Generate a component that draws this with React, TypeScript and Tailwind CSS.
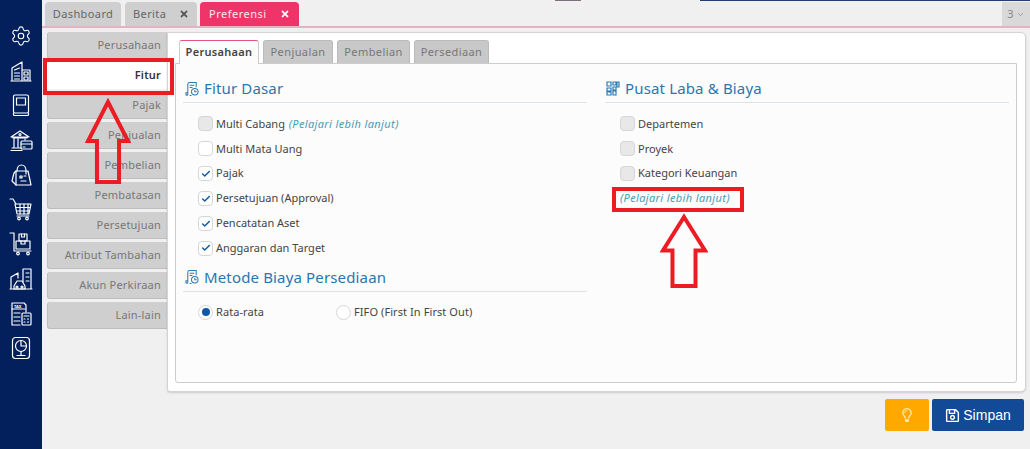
import React from "react";
import { Settings, ChevronDown, Check } from "lucide-react";
import { FaTimes, FaRegSave, FaRegLightbulb } from "react-icons/fa";

const font = "font-['Noto_Sans','Open_Sans',sans-serif]";

function Side({ d }: { d: React.ReactNode }) {
  return (
    <svg width="24" height="24" viewBox="0 0 24 24" fill="none" stroke="white" strokeWidth="1.2" strokeLinejoin="round" strokeLinecap="round">
      {d}
    </svg>
  );
}

const sideIcons: React.ReactNode[] = [
  <Settings key="s" size={22} color="white" strokeWidth={1.2} />,
  <Side key="b" d={<><path d="M3 22V9l10-6v19M13 11h8v11M2 22h20" /><path d="M5.5 11l5-2M5.5 14h5M5.5 17h5M5.5 20h5M15 13h4v3h-4zM15 18h4v3h-4z" /></>} />,
  <Side key="k" d={<><rect x="4.5" y="2" width="15" height="18" rx="1.5" /><path d="M4.5 20v1.5a1 1 0 0 0 1 1h13a1 1 0 0 0 1-1V20M7.5 5h9v7h-9z" /></>} />,
  <Side key="bk" d={<><path d="M2 9l9-6 9 6zM4 9v1h14V9M5 11v8M9 11v8M3 20h9M2 22.5h11" /><circle cx="11" cy="6.5" r="1" /><rect x="12" y="13" width="11" height="8" rx="1" /><path d="M12 16h11M14 19h2" /><path d="M16 11v1" /></>} />,
  <Side key="bag" d={<><path d="M8 8c0-8 9-8 9 0v3" /><path d="M7 8h12l3 14H7L3 18l2-8z" /><path d="M7 8v14" /><path d="M11 13h2v2h-2zM15 13h2M12 18h5" /></>} />,
  <Side key="c1" d={<><path d="M1 2h3l3 5h15l-2 10H8L6 7" /><path d="M11 7v10M15 7v10M19 7v10M7 10.5h14M8 14h12M8 19h12" /><circle cx="10" cy="21.5" r="1.3" /><circle cx="18" cy="21.5" r="1.3" /></>} />,
  <Side key="c2" d={<><path d="M1 1h4v18h17" /><rect x="10" y="2" width="8" height="7" /><rect x="7" y="9" width="14" height="8" /><path d="M12.5 2v3h3V2M12 9v3h4V9" /><circle cx="9" cy="21.5" r="1.3" /><circle cx="19" cy="21.5" r="1.3" /></>} />,
  <Side key="f" d={<><path d="M2 22V10l7-4v5M14 15V2h8v20M1 22h22" /><path d="M17 6h3M17 10h3M17 14h3" /><path d="M5 22v-3l3-5h5l3 5v3z" /><circle cx="8" cy="20" r="1" /><circle cx="13" cy="20" r="1" /></>} />,
  <Side key="tax" d={<><path d="M11 23H3V1h12l2 2v7" /><path d="M3 7h13" /><text x="5" y="5.5" fontSize="4" fill="white" stroke="none" fontWeight="700">TAX</text><path d="M5 11h6M5 15h6M5 19h6" /><rect x="13" y="11" width="9" height="12" rx="1" /><path d="M15 14h5M15 17h1M18.5 17h1M15 20h1M18.5 20h1" /></>} />,
  <Side key="pie" d={<><rect x="3.5" y="1.5" width="17" height="21" rx="3" /><circle cx="12" cy="10" r="5.5" /><path d="M12 4.5v5.5h5.5" /><path d="M8 19.5h8M12 15.5v4" /></>} />,
];

const sideTabs = ["Perusahaan", "Fitur", "Pajak", "Penjualan", "Pembelian", "Pembatasan", "Persetujuan", "Atribut Tambahan", "Akun Perkiraan", "Lain-lain"];

function Doc() {
  return (
    <svg width="14" height="16" viewBox="0 0 15 16" fill="none" stroke="#2a7ab5" strokeWidth="1.1" className="shrink-0 ml-[1px]">
      <path d="M3 14V3c0-1 1-2 2-2h7v5M3 14c0 1-2 1-2 0v-2h2M5 15h2M5 4h5M5 6.5h3" />
      <circle cx="10.5" cy="11" r="3.5" />
      <path d="M10.5 9v2h2" />
    </svg>
  );
}

function Grid() {
  return (
    <svg width="14" height="15" viewBox="0 0 14 15" fill="none" stroke="#2a7ab5" strokeWidth="1.2" className="shrink-0">
      <path d="M1 1h4v4H1zM7 1h3v3H7zM11 1h2v5h-2zM1 7h4v3H1zM1 11h4v3H1zM7 6h3v3H7zM7 10h3v4H7z" />
    </svg>
  );
}

function Heading({ icon, children }: { icon: React.ReactNode; children: React.ReactNode }) {
  return (
    <div className="flex items-center gap-[5px] h-[28px] border-b border-[#dde2e6] text-[#2a76ad] text-[15px] tracking-[0.15px] leading-none pl-[1px]">
      {icon}
      <span>{children}</span>
    </div>
  );
}

function Cb({ state, children }: { state: "off" | "gray" | "on"; children: React.ReactNode }) {
  return (
    <div className="flex items-center h-[24.9px] gap-[3px]">
      <span className={`w-[15px] h-[15px] rounded-[4px] border border-[#d6d6d6] flex items-center justify-center shrink-0 ${state === "gray" ? "bg-[#e8e8e8]" : "bg-white"}`}>
        {state === "on" && <Check size={10} color="#0f5aa6" strokeWidth={3.5} />}
      </span>
      <span className="text-[11px] text-[#444] tracking-[0px]">{children}</span>
    </div>
  );
}

function Learn({ className }: { className?: string }) {
  return <i className={`text-[11px] text-[#4a9bb5] tracking-[0.36px] ${className ?? ""}`}>(Pelajari lebih lanjut)</i>;
}

function Radio({ on, children, className }: { on?: boolean; children: React.ReactNode; className?: string }) {
  return (
    <div className={`flex items-center gap-[3px] ${className ?? ""}`}>
      <span className="w-[15px] h-[15px] rounded-full border border-[#d6d6d6] bg-white flex items-center justify-center shrink-0">
        {on && <span className="w-[8px] h-[8px] rounded-full bg-[#0f5aa6]" />}
      </span>
      <span className="text-[11px] text-[#444] tracking-[0.08px]">{children}</span>
    </div>
  );
}

function Arrow({ className, w, h }: { className: string; w: number; h: number }) {
  return (
    <svg className={`absolute ${className}`} width={w} height={h} viewBox={`0 0 ${w} ${h}`} fill="none" stroke="#ec1c24" strokeWidth="4" strokeLinejoin="miter">
      <path d={`M${w / 2} 4 L${w - 3} ${h * 0.5} H${w * 0.74} V${h - 2} H${w * 0.26} V${h * 0.5} H3 Z`} />
    </svg>
  );
}

export default function App() {
  return (
    <div className={`relative flex w-[1030px] h-[449px] overflow-hidden bg-[#f0f0f0] ${font}`}>
      <aside className="w-[42px] shrink-0 bg-[#03205c] flex flex-col items-center pt-[24px] gap-[10.7px]">
        {sideIcons.map((ic, i) => (
          <div key={i} className="h-[24px] w-[24px] flex items-center justify-center">{ic}</div>
        ))}
      </aside>
      <main className="flex-1 min-w-0 flex flex-col">
        <div className="h-[1px] shrink-0 flex pl-[513px]">
          <div className="w-[26px] h-[1px] bg-[#7d6f7d]" />
          <div className="ml-[119px] w-[330px] h-[1px] bg-[#23406f]" />
        </div>
        <div className="h-[24px] mt-[1px] shrink-0 flex items-end pl-[3px] gap-[3px] border-b-2 border-[#e3b3c2] box-content">
          <div className="w-[76px] h-[24px] rounded-t-[4px] bg-[#cfcfcf] flex items-center justify-center text-[11px] text-[#666] tracking-[0.4px]">Dashboard</div>
          <div className="ml-[1px] w-[72px] h-[24px] rounded-t-[4px] bg-[#cfcfcf] flex items-center justify-between pl-[8px] pr-[8px] text-[11px] text-[#666] tracking-[0.4px]">
            Berita <FaTimes size={10} color="#555" />
          </div>
          <div className="w-[99px] h-[24px] rounded-t-[4px] bg-[#ee3468] flex items-center justify-between pl-[9px] pr-[9px] text-[11px] text-[#fde7ee] tracking-[0.5px]">
            Preferensi <FaTimes size={10} color="white" />
          </div>
          <div className="ml-auto w-[28px] h-[24px] bg-[#d9d9d9] flex items-center justify-center gap-[2px] text-[11px] text-[#888]">
            3 <ChevronDown size={9} color="#888" />
          </div>
        </div>
        <div className="flex-1 flex flex-col">
          <div className="flex h-[360px] mt-[4px] pl-[5px] pr-[4px]">
            <div className="w-[120px] shrink-0 flex flex-col gap-[3px]">
              {sideTabs.map((t) => (
                <div key={t} className={`h-[27px] shrink-0 flex items-center justify-end pr-[6px] rounded-l-[3px] text-[11px] tracking-[0.2px] ${t === "Fitur" ? "bg-white text-[#333] font-semibold" : "bg-[#cfcfcf] text-[#777] border-l border-b border-[#bdbdbd]"}`}>
                  {t}
                </div>
              ))}
            </div>
            <div className="flex-1 bg-white rounded-r-[5px] rounded-bl-[3px] border border-[#d4d4d4] shadow-[0_1px_2px_rgba(0,0,0,0.15)] pt-[7px] pl-[7px] pr-[8px] pb-[8px] flex flex-col">
              <div className="flex items-end h-[23px] gap-[4px] pl-[4px] shrink-0 relative z-10">
                <div className="w-[80px] h-[24px] -mb-[1px] bg-[#fcfcfc] rounded-t-[3px] border border-b-0 border-[#ccc] border-t-[#e3557f] flex items-center justify-center text-[11px] font-semibold text-[#444] tracking-[0.3px]">Perusahaan</div>
                <div className="w-[70px] h-[23px] bg-[#c8c8c8] rounded-t-[3px] border border-[#bbb] border-b-0 flex items-center justify-center text-[11px] text-[#777] tracking-[0.4px]">Penjualan</div>
                <div className="w-[73px] h-[23px] bg-[#c8c8c8] rounded-t-[3px] border border-[#bbb] border-b-0 flex items-center justify-center text-[11px] text-[#777] tracking-[0.4px]">Pembelian</div>
                <div className="w-[75px] h-[23px] bg-[#c8c8c8] rounded-t-[3px] border border-[#bbb] border-b-0 flex items-center justify-center text-[11px] text-[#777] tracking-[0.4px]">Persediaan</div>
              </div>
              <div className="flex-1 bg-[#fcfcfc] border border-[#ccc] rounded-b-[3px] pt-[11px] px-[7px] grid grid-cols-2 gap-x-[18px]">
                <div>
                  <Heading icon={<Doc />}>Fitur Dasar</Heading>
                  <div className="pl-[15px] pt-[8.5px]">
                    <Cb state="gray">Multi Cabang <Learn className="ml-[1px]" /></Cb>
                    <Cb state="off">Multi Mata Uang</Cb>
                    <Cb state="on">Pajak</Cb>
                    <Cb state="on">Persetujuan (Approval)</Cb>
                    <Cb state="on">Pencatatan Aset</Cb>
                    <Cb state="on">Anggaran dan Target</Cb>
                  </div>
                  <div className="mt-[3px]"><Heading icon={<Doc />}>Metode Biaya Persediaan</Heading></div>
                  <div className="pl-[15px] pt-[12px] flex">
                    <Radio on className="w-[138px]">Rata-rata</Radio>
                    <Radio>FIFO (First In First Out)</Radio>
                  </div>
                </div>
                <div>
                  <Heading icon={<Grid />}>Pusat Laba &amp; Biaya</Heading>
                  <div className="pl-[15px] pt-[8.5px]">
                    <Cb state="gray">Departemen</Cb>
                    <Cb state="gray">Proyek</Cb>
                    <Cb state="gray">Kategori Keuangan</Cb>
                    <div className="h-[24.9px] flex items-center"><Learn /></div>
                  </div>
                </div>
              </div>
            </div>
          </div>
          <div className="flex justify-end gap-[3px] pr-[6px] pt-[7px]">
            <div className="w-[44px] h-[32px] bg-[#ffa800] rounded-[2px] flex items-center justify-center">
              <FaRegLightbulb size={14} color="#ffe9a8" />
            </div>
            <div className="w-[92px] h-[32px] bg-[#124a98] rounded-[2px] flex items-center justify-center gap-[3px] text-white text-[14px] font-['Liberation_Sans',sans-serif]">
              <FaRegSave size={15} color="white" /> Simpan
            </div>
          </div>
        </div>
      </main>
      {/* annotations */}
      <div className="absolute left-[43px] top-[58px] w-[131px] h-[37px] border-[4px] border-[#ec1c24]" />
      <div className="absolute left-[612px] top-[187px] w-[132px] h-[24.5px] border-[4px] border-[#ec1c24]" />
      <Arrow className="left-[85px] top-[98px]" w={46} h={86} />
      <Arrow className="left-[660px] top-[213px]" w={48} h={75} />
    </div>
  );
}
